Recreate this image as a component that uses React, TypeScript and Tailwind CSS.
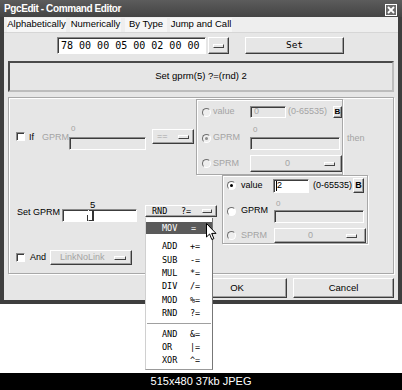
import React from 'react';

const SANS = "font-['Liberation_Sans',Arial,sans-serif]";
const MONO = "font-['DejaVu_Sans_Mono','Liberation_Mono',monospace]";

const RAISED =
  'bg-[#e6e6e6] border border-t-white border-l-white border-r-[#3c3c3c] border-b-[#3c3c3c] shadow-[inset_-1px_-1px_0_#a0a0a0]';
const SUNKEN =
  'border border-t-[#8a8a8a] border-l-[#8a8a8a] border-r-white border-b-white shadow-[inset_1px_1px_0_#3c3c3c]';
const ETCHED = 'border border-[#a8a8a8] shadow-[inset_1px_1px_0_#fff,1px_1px_0_#fff]';
const DIM = 'text-[#a4a4a4]';

function Indicator({ className = '' }: { className?: string }) {
  return (
    <span
      className={`block h-[4px] border border-t-white border-l-white border-r-[#444] border-b-[#444] ${className}`}
    />
  );
}

function Check() {
  return <span className={`block w-[9px] h-[9px] bg-white ${SUNKEN}`} />;
}

function Radio({ on, dim }: { on?: boolean; dim?: boolean }) {
  return (
    <span
      className={`flex items-center justify-center w-[9px] h-[9px] rounded-full border border-t-[#6e6e6e] border-l-[#6e6e6e] border-r-white border-b-white ${
        dim ? 'bg-[#eeeeee]' : 'bg-white'
      }`}
    >
      {on && <span className={`block w-[3px] h-[3px] rounded-full ${dim ? 'bg-[#8c8c8c]' : 'bg-black'}`} />}
    </span>
  );
}

const ops = [
  ['ADD', '+='],
  ['SUB', '-='],
  ['MUL', '*='],
  ['DIV', '/='],
  ['MOD', '%='],
  ['RND', '?='],
];
const bits = [
  ['AND', '&='],
  ['OR', '|='],
  ['XOR', '^='],
];

export default function App() {
  return (
    <div
      className={`relative w-[402px] h-[390px] overflow-hidden bg-white flex flex-col whitespace-nowrap ${SANS} text-[9px] text-black`}
    >
      {/* dialog window */}
      <div className="h-[304px] bg-[#3e3e3e] flex flex-col">
        {/* title bar */}
        <div className="h-[17px] flex items-center justify-between pl-[4px] pr-[5px] bg-gradient-to-b from-[#5c5c5c] to-[#444444]">
          <span className="text-white font-bold text-[10px] tracking-[-0.4px] leading-[17px]">PgcEdit - Command Editor</span>
          <span className="mt-[3px] flex items-center justify-center w-[12px] h-[12px] border border-white bg-[#6a6a6a]">
            <svg width="8" height="8" viewBox="0 0 8 8">
              <path d="M1 1 L7 7 M7 1 L1 7" stroke="#fff" strokeWidth="1.8" />
            </svg>
          </span>
        </div>

        {/* client */}
        <div className="mx-[4px] mb-[4px] flex-1 bg-[#e6e6e6] flex flex-col">
          {/* menu row */}
          <div className="h-[16px] bg-[#eeeeee] border-b border-b-[#d6d6d6] flex items-center pl-[3px] text-[9.5px]">
            <span className="w-[59px] h-[14px] flex items-center justify-center bg-[#f6f6f6]">Alphabetically</span>
            <span className="ml-[4px] w-[51px] h-[14px] flex items-center justify-center bg-[#f6f6f6]">Numerically</span>
            <span className="ml-[4px] w-[42px] h-[14px] flex items-center justify-center bg-[#f6f6f6]">By Type</span>
            <span className="ml-[3px] w-[62px] h-[14px] flex items-center justify-center bg-[#f6f6f6]">Jump and Call</span>
          </div>

          {/* hex row */}
          <div className="mt-[4px] h-[17px] flex">
            <div className={`ml-[53px] w-[149px] h-[17px] bg-white flex items-center pl-[3px] overflow-hidden ${SUNKEN}`}>
              <span className={`${MONO} text-[10px]`}>78 00 00 05 00 02 00 00</span>
            </div>
            <div className={`ml-[2px] w-[21px] h-[17px] flex items-center justify-center ${RAISED}`}>
              <Indicator className="w-[11px]" />
            </div>
            <div className={`ml-[16px] w-[99px] h-[17px] flex items-center justify-center ${RAISED}`}>
              <span className={`${MONO} text-[9.5px]`}>Set</span>
            </div>
          </div>

          {/* command text */}
          <div className="mt-[7px] ml-[4px] w-[386px] h-[31px] flex items-center justify-center border-2 border-t-[#4a4a4a] border-l-[#4a4a4a] border-r-[#bcbcbc] border-b-[#bcbcbc]">
            <span className="text-[9.5px]">Set gprm(5) ?=(rnd) 2</span>
          </div>

          {/* main group */}
          <div className={`mt-[5px] ml-[4px] w-[386px] h-[177px] flex flex-col ${ETCHED}`}>
            {/* if section */}
            <div className="h-[77px] flex items-start">
              <div className="w-[187px] flex items-start">
                <div className="ml-[7px] mt-[34px]">
                  <Check />
                </div>
                <span className="ml-[4px] w-[13px] mt-[33px] h-[12px] leading-[12px]">If</span>
                <span className={`w-[27px] mt-[33px] h-[12px] leading-[12px] ${DIM}`}>GPRM</span>
                <div className="w-[77px] mt-[26px] flex flex-col">
                  <span className={`h-[10px] leading-[10px] pl-[2px] text-[8px] ${DIM}`}>0</span>
                  <div className={`mt-[3px] h-[13px] ${SUNKEN}`} />
                </div>
                <div className={`ml-[6px] mt-[31px] w-[42px] h-[15px] flex items-center ${RAISED}`}>
                  <span className={`flex-1 pl-[4px] ${DIM}`}>==</span>
                  <Indicator className="w-[11px] mr-[4px]" />
                </div>
              </div>

              <div className={`mt-[1px] w-[147px] h-[76px] flex flex-col ${ETCHED}`}>
                <div className="mt-[6px] h-[12px] flex items-center">
                  <div className="w-[53px] flex items-center">
                    <span className="ml-[5px]">
                      <Radio dim />
                    </span>
                    <span className={`ml-[2px] ${DIM}`}>value</span>
                  </div>
                  <div className={`w-[36px] h-[12px] flex items-center pl-[3px] ${SUNKEN} ${DIM}`}>0</div>
                  <span className={`w-[47px] pl-[2px] ${DIM}`}>(0-65535)</span>
                  <div className={`w-[9px] h-[12px] flex items-center justify-center font-bold text-[8px] ${RAISED}`}>B</div>
                </div>
                <div className="h-[32px] flex items-start">
                  <div className="w-[53px] h-[12px] mt-[14px] flex items-center">
                    <span className="ml-[5px]">
                      <Radio on dim />
                    </span>
                    <span className={`ml-[2px] ${DIM}`}>GPRM</span>
                  </div>
                  <div className="w-[90px] mt-[7px] flex flex-col">
                    <span className={`h-[10px] leading-[10px] pl-[3px] text-[8px] ${DIM}`}>0</span>
                    <div className={`mt-[2px] h-[13px] ${SUNKEN}`} />
                  </div>
                </div>
                <div className="mt-[5px] h-[17px] flex items-center">
                  <div className="w-[53px] flex items-center">
                    <span className="ml-[5px]">
                      <Radio dim />
                    </span>
                    <span className={`ml-[2px] ${DIM}`}>SPRM</span>
                  </div>
                  <div className={`w-[92px] h-[17px] flex items-center ${RAISED}`}>
                    <span className={`flex-1 text-center ${DIM}`}>0</span>
                    <Indicator className="w-[11px] mr-[6px]" />
                  </div>
                </div>
              </div>
              <span className={`ml-[4px] mt-[34px] h-[12px] leading-[12px] ${DIM}`}>then</span>
            </div>

            {/* set section */}
            <div className="h-[68px] flex items-start">
              <div className="w-[213px] flex items-start">
                <span className="ml-[8px] w-[45px] mt-[31px] h-[12px] leading-[12px]">Set GPRM</span>
                <div className="w-[75px] mt-[25px] flex flex-col">
                  <span className="h-[9px] leading-[9px] pl-[28px] text-[9.5px]">5</span>
                  <div className={`h-[13px] bg-white flex items-start ${SUNKEN}`}>
                    <div className="ml-[20px] w-[11px] h-[11px] flex items-end">
                      <div className="w-[5px] h-[6px] border-r border-r-[#333]" />
                      <div className="w-[6px] h-[11px] border-r-2 border-r-[#333] border-b border-b-[#333] border-l border-l-white" />
                    </div>
                  </div>
                </div>
                <div className={`ml-[8px] mt-[30px] w-[72px] h-[12px] flex items-center ${RAISED}`}>
                  <span className={`${MONO} text-[8.5px] pl-[6px] w-[35px]`}>RND</span>
                  <span className={`${MONO} text-[8.5px] flex-1`}>?=</span>
                  <Indicator className="w-[10px] mr-[4px]" />
                </div>
              </div>

              <div className={`w-[146px] h-[69px] flex flex-col ${ETCHED}`}>
                <div className="mt-[2px] h-[15px] flex items-center">
                  <div className="w-[50px] flex items-center">
                    <span className="ml-[4px]">
                      <Radio on />
                    </span>
                    <span className="ml-[5px]">value</span>
                  </div>
                  <div className={`w-[36px] h-[14px] bg-white flex items-center ${SUNKEN}`}>
                    <span className="ml-[2px] w-px h-[10px] bg-black" />
                    <span>2</span>
                  </div>
                  <span className="w-[44px] pl-[4px]">(0-65535)</span>
                  <div className={`w-[11px] h-[15px] flex items-center justify-center font-bold ${RAISED}`}>B</div>
                </div>
                <div className="h-[30px] flex items-start">
                  <div className="w-[51px] h-[12px] mt-[12px] flex items-center">
                    <span className="ml-[4px]">
                      <Radio />
                    </span>
                    <span className="ml-[5px]">GPRM</span>
                  </div>
                  <div className="w-[90px] mt-[6px] flex flex-col">
                    <span className={`h-[10px] leading-[10px] pl-[2px] text-[8px] ${DIM}`}>0</span>
                    <div className={`mt-[1px] h-[13px] ${SUNKEN}`} />
                  </div>
                </div>
                <div className="mt-[5px] h-[15px] flex items-center">
                  <div className="w-[51px] flex items-center">
                    <span className="ml-[4px]">
                      <Radio dim />
                    </span>
                    <span className={`ml-[5px] ${DIM}`}>SPRM</span>
                  </div>
                  <div className={`w-[92px] h-[15px] flex items-center ${RAISED}`}>
                    <span className={`flex-1 text-center ${DIM}`}>0</span>
                    <Indicator className="w-[11px] mr-[8px]" />
                  </div>
                </div>
              </div>
            </div>

            {/* and section */}
            <div className="flex-1 flex items-start">
              <div className="ml-[7px] mt-[10px]">
                <Check />
              </div>
              <span className="ml-[5px] w-[20px] mt-[8px] h-[12px] leading-[12px]">And</span>
              <div className={`mt-[7px] w-[82px] h-[15px] flex items-center ${RAISED}`}>
                <span className={`flex-1 pl-[9px] ${DIM}`}>LinkNoLink</span>
                <Indicator className="w-[12px] mr-[5px]" />
              </div>
            </div>
          </div>

          {/* buttons */}
          <div className="mt-[4px] h-[20px] flex justify-end pr-[4px] text-[9.5px]">
            <div className={`w-[100px] h-[20px] flex items-center justify-center ${RAISED}`}>OK</div>
            <div className={`ml-[6px] w-[101px] h-[20px] flex items-center justify-center ${RAISED}`}>Cancel</div>
          </div>
        </div>
      </div>

      <div className="flex-1" />
      <div className="h-[17px] bg-black text-white text-[11px] flex items-center justify-center">515x480 37kb JPEG</div>

      {/* open option menu */}
      <div className="absolute left-[145px] top-[218px] w-[68px] h-[152px] bg-white border-l border-l-[#d0d0d0] border-r border-r-[#777] border-b border-b-[#999] pt-[4px] flex flex-col">
        <div className={`h-[12px] bg-[#5a5a5a] text-white flex items-center pl-[16px] ${MONO} text-[8.5px]`}>
          <span className="w-[29px]">MOV</span>
          <span>=</span>
        </div>
        <div className="mt-[6px] flex flex-col">
          {ops.map(([n, o]) => (
            <div key={n} className={`h-[13.4px] flex items-center pl-[16px] ${MONO} text-[8.5px]`}>
              <span className="w-[28px]">{n}</span>
              <span>{o}</span>
            </div>
          ))}
        </div>
        <div className="mt-[2.5px] mb-[3.5px] mx-[1px] h-px bg-[#a0a0a0]" />
        {bits.map(([n, o]) => (
          <div key={n} className={`h-[13.4px] flex items-center pl-[16px] ${MONO} text-[8.5px]`}>
            <span className="w-[28px]">{n}</span>
            <span>{o}</span>
          </div>
        ))}
      </div>

      {/* mouse pointer */}
      <svg className="absolute left-[206px] top-[223px]" width="11" height="18" viewBox="0 0 11 18">
        <path d="M0.5 0.5 L0.5 14 L3.6 11 L5.8 16.5 L7.9 15.6 L5.7 10.4 L10 10.4 Z" fill="#fff" stroke="#000" strokeWidth="1" />
      </svg>
    </div>
  );
}
